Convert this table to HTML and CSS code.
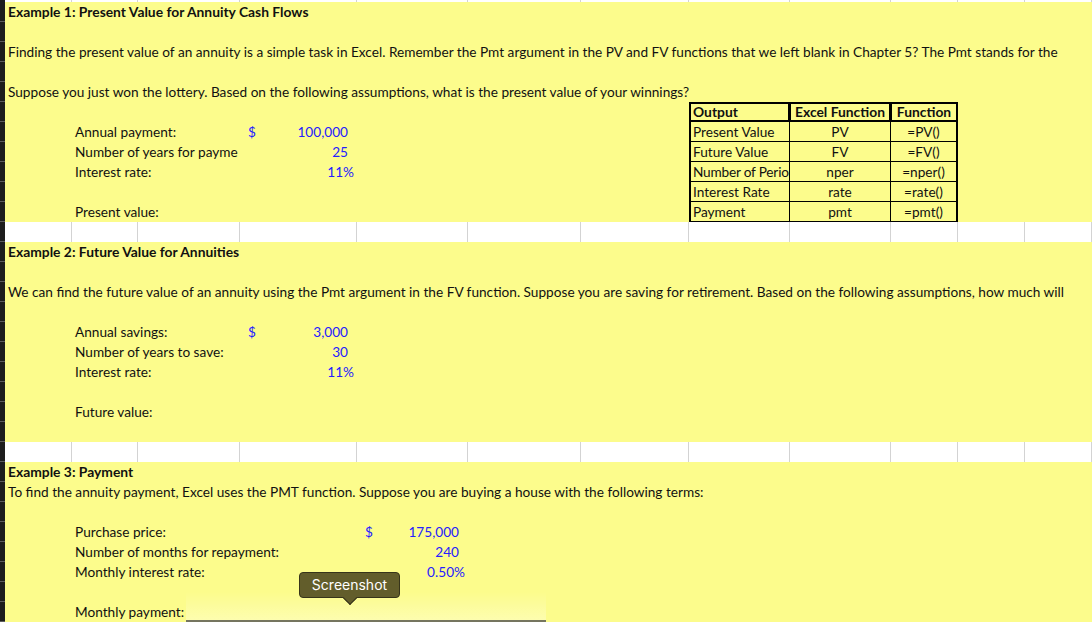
FILE: index.html
```html
<!DOCTYPE html>
<html>
<head>
<meta charset="utf-8">
<link rel="stylesheet" href="styles.css">
</head>
<body>
<div class="sheet">
  <div class="row top"><span class="g"></span><span class="g"></span><span class="g"></span><span class="g"></span><span class="g"></span><span class="g"></span><span class="g"></span><span class="g"></span><span class="g"></span><span class="g"></span><span class="g"></span><span class="g"></span></div>

  <div class="row fill"><div class="wide bold">Example 1: Present Value for Annuity Cash Flows</div></div>
  <div class="row fill"></div>
  <div class="row fill"><div class="wide">Finding the present value of an annuity is a simple task in Excel. Remember the Pmt argument in the PV and FV functions that we left blank in Chapter 5? The Pmt stands for the</div></div>
  <div class="row fill"></div>
  <div class="row fill"><div class="wide">Suppose you just won the lottery. Based on the following assumptions, what is the present value of your winnings?</div></div>
  <div class="row fill">
    <div class="t1 th left">Output</div><div class="t2 th">Excel Function</div><div class="t3 th">Function</div>
  </div>
  <div class="row fill">
    <div class="lbl">Annual payment:</div>
    <div class="colD acct"><span>$</span><span>100,000</span></div>
    <div class="t1 td left">Present Value</div><div class="t2 td">PV</div><div class="t3 td">=PV()</div>
  </div>
  <div class="row fill">
    <div class="lbl">Number of years for payme</div>
    <div class="colD num">25</div>
    <div class="t1 td left">Future Value</div><div class="t2 td">FV</div><div class="t3 td">=FV()</div>
  </div>
  <div class="row fill">
    <div class="lbl">Interest rate:</div>
    <div class="colD pct">11%</div>
    <div class="t1 td left tight">Number of Perio</div><div class="t2 td">nper</div><div class="t3 td">=nper()</div>
  </div>
  <div class="row fill">
    <div class="t1 td left">Interest Rate</div><div class="t2 td">rate</div><div class="t3 td">=rate()</div>
  </div>
  <div class="row fill">
    <div class="lbl">Present value:</div>
    <div class="t1 td left">Payment</div><div class="t2 td">pmt</div><div class="t3 td">=pmt()</div>
  </div>

  <div class="row blank"><span class="g"></span><span class="g"></span><span class="g"></span><span class="g"></span><span class="g"></span><span class="g"></span><span class="g"></span><span class="g"></span><span class="g"></span><span class="g"></span><span class="g"></span><span class="g"></span></div>

  <div class="row fill"><div class="wide bold">Example 2: Future Value for Annuities</div></div>
  <div class="row fill"></div>
  <div class="row fill"><div class="wide">We can find the future value of an annuity using the Pmt argument in the FV function. Suppose you are saving for retirement. Based on the following assumptions, how much will</div></div>
  <div class="row fill"></div>
  <div class="row fill">
    <div class="lbl">Annual savings:</div>
    <div class="colD acct"><span>$</span><span>3,000</span></div>
  </div>
  <div class="row fill">
    <div class="lbl">Number of years to save:</div>
    <div class="colD num">30</div>
  </div>
  <div class="row fill">
    <div class="lbl">Interest rate:</div>
    <div class="colD pct">11%</div>
  </div>
  <div class="row fill"></div>
  <div class="row fill"><div class="lbl">Future value:</div></div>
  <div class="row fill"></div>

  <div class="row blank"><span class="g"></span><span class="g"></span><span class="g"></span><span class="g"></span><span class="g"></span><span class="g"></span><span class="g"></span><span class="g"></span><span class="g"></span><span class="g"></span><span class="g"></span><span class="g"></span></div>

  <div class="row fill"><div class="wide bold">Example 3: Payment</div></div>
  <div class="row fill"><div class="wide">To find the annuity payment, Excel uses the PMT function. Suppose you are buying a house with the following terms:</div></div>
  <div class="row fill"></div>
  <div class="row fill">
    <div class="lbl long">Purchase price:</div>
    <div class="colE acct"><span>$</span><span>175,000</span></div>
  </div>
  <div class="row fill">
    <div class="lbl long">Number of months for repayment:</div>
    <div class="colE num">240</div>
  </div>
  <div class="row fill">
    <div class="lbl long">Monthly interest rate:</div>
    <div class="colE pct">0.50%</div>
  </div>
  <div class="row fill"></div>
  <div class="row fill"><div class="lbl long">Monthly payment:</div></div>

  <div class="shade"></div>
  <div class="tooltip">Screenshot<span class="tip"></span></div>
</div>
</body>
</html>
```

FILE: styles.css
```css
html, body {
  margin: 0;
  padding: 0;
  background: #ffffff;
}

.sheet {
  position: relative;
  width: 1092px;
  height: 622px;
  overflow: hidden;
  font-family: Lato, "Open Sans", sans-serif;
  font-size: 13.65px;
  color: #111111;
}

.row {
  display: grid;
  grid-template-columns: 5px 67px 66px 102px 117px 111px 113px 108px 101px 101px 67px 67px 67px;
  height: 20px;
  line-height: 20px;
  white-space: nowrap;
}

.row::before {
  content: "";
  grid-column: 1;
  grid-row: 1;
  background: #1d1d1d;
  border-bottom: 1px solid #5c5c5c;
  box-sizing: border-box;
}

.row > * {
  grid-row: 1;
  box-sizing: border-box;
}

.row.top {
  height: 2px;
}

.row.top::before {
  border-bottom: none;
}

.row.fill {
  background: #fcfc8c;
}

.row.blank {
  background: #ffffff;
}

.g {
  border-right: 1px solid #d3d3d3;
}

.wide {
  grid-column: 2 / -1;
  padding-left: 3px;
}

.bold {
  font-weight: 700;
  font-size: 13.85px;
}

.lbl {
  grid-column: 3 / 5;
  padding-left: 3px;
  overflow: hidden;
}

.lbl.long {
  grid-column: 3 / 6;
}

.colD {
  grid-column: 5;
}

.colE {
  grid-column: 6;
}

.acct {
  display: flex;
  justify-content: space-between;
  padding: 0 9px 0 8px;
  color: #2420ff;
}

.num {
  text-align: right;
  padding-right: 9px;
  color: #2420ff;
}

.pct {
  text-align: right;
  padding-right: 3px;
  color: #2420ff;
}

.t1 { grid-column: 9; }
.t2 { grid-column: 10; }
.t3 { grid-column: 11; }

.th, .td {
  text-align: center;
  overflow: hidden;
}

.th {
  font-weight: 700;
  border: 2px solid #000000;
  border-left-width: 1px;
  line-height: 16px;
  font-size: 13.85px;
}

.t1.th {
  border-left-width: 2px;
}

.td {
  border-right: 1px solid #000000;
  border-bottom: 1px solid #000000;
  line-height: 21px;
}

.t1.td {
  border-left: 2px solid #000000;
}

.t3.td {
  border-right: 2px solid #000000;
}

.left {
  text-align: left;
  padding-left: 2px;
}

.tight {
  letter-spacing: -0.2px;
}

.shade {
  position: absolute;
  left: 186px;
  top: 592px;
  width: 360px;
  height: 30px;
  background: linear-gradient(to bottom, rgba(255, 255, 255, 0), rgba(255, 255, 255, 0.3));
  border-bottom: 2px solid #75755f;
  box-sizing: border-box;
}

.tooltip {
  position: absolute;
  left: 299px;
  top: 572px;
  width: 101px;
  height: 26px;
  box-sizing: border-box;
  background: #625d2b;
  border: 1px solid #37341a;
  border-radius: 4px;
  color: #ffffff;
  font-family: Inter, "Liberation Sans", sans-serif;
  font-size: 14px;
  line-height: 24px;
  text-align: center;
}

.tip {
  position: absolute;
  left: 45px;
  bottom: -6px;
  width: 9px;
  height: 9px;
  background: #625d2b;
  border-right: 1px solid #37341a;
  border-bottom: 1px solid #37341a;
  transform: rotate(45deg);
}
```
